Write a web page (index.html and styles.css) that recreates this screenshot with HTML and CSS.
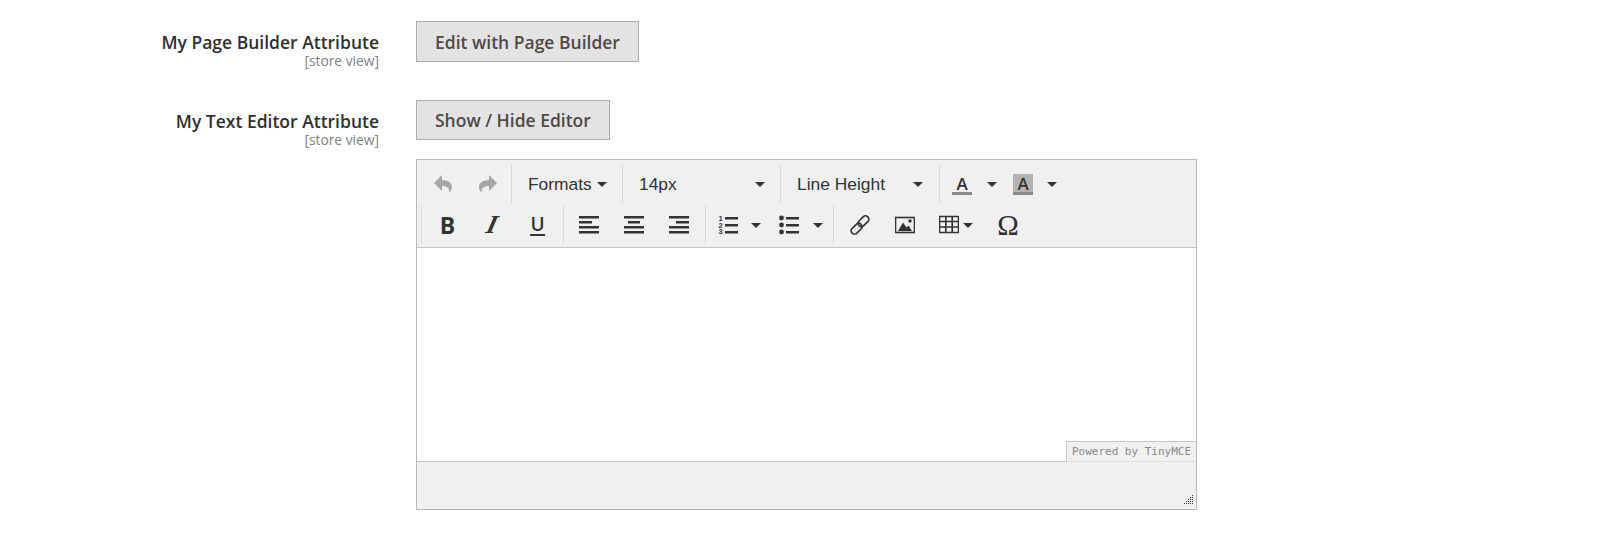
FILE: index.html
```html
<!DOCTYPE html>
<html lang="en">
<head>
    <meta charset="UTF-8">
    <title>Attributes</title>
    <link rel="stylesheet" href="styles.css">
</head>
<body>

<div class="form-row row-builder">
    <div class="field-label">
        <div class="label-name">My Page Builder Attribute</div>
        <div class="label-scope">[store view]</div>
    </div>
    <div class="field-control">
        <button class="action-btn btn-tall">Edit with Page Builder</button>
    </div>
</div>

<div class="form-row">
    <div class="field-label">
        <div class="label-name">My Text Editor Attribute</div>
        <div class="label-scope">[store view]</div>
    </div>
    <div class="field-control">
        <button class="action-btn">Show / Hide Editor</button>

        <div class="mce-panel">
            <div class="mce-toolbar">
                <div class="mce-row">
                    <div class="mce-group first">
                        <span class="mce-btn">
                            <svg class="ico" viewBox="0 0 20 20"><path class="muted" d="M1 9 L9 1 V6 C15 6 19 9 19 13 C19 15 18 17 16 19 C17 14 14 12 9 12 V17 Z"/></svg>
                        </span>
                        <span class="mce-btn">
                            <svg class="ico" viewBox="0 0 20 20"><path class="muted" d="M19 9 L11 1 V6 C5 6 1 9 1 13 C1 15 2 17 4 19 C3 14 6 12 11 12 V17 Z"/></svg>
                        </span>
                    </div>
                    <div class="mce-group">
                        <span class="mce-list w-formats">Formats<i class="caret"></i></span>
                    </div>
                    <div class="mce-group">
                        <span class="mce-list w-size">14px<i class="caret"></i></span>
                    </div>
                    <div class="mce-group">
                        <span class="mce-list w-line">Line Height<i class="caret"></i></span>
                    </div>
                    <div class="mce-group">
                        <span class="mce-split w-color">
                            <span class="color-a">A</span><i class="caret"></i>
                        </span>
                        <span class="mce-split w-back">
                            <span class="color-a back">A</span><i class="caret"></i>
                        </span>
                    </div>
                </div>

                <div class="mce-row">
                    <div class="mce-group">
                        <span class="mce-btn"><span class="glyph-b">B</span></span>
                        <span class="mce-btn"><span class="glyph-i">I</span></span>
                        <span class="mce-btn"><span class="glyph-u">U</span></span>
                    </div>
                    <div class="mce-group group-align">
                        <span class="mce-btn">
                            <svg class="ico" viewBox="0 0 20 20"><path d="M0 1h20v2.6H0zM0 6h13v2.6H0zM0 11h20v2.6H0zM0 16h20v2.6H0z"/></svg>
                        </span>
                        <span class="mce-btn">
                            <svg class="ico" viewBox="0 0 20 20"><path d="M0 1h20v2.6H0zM4 6h12v2.6H4zM0 11h20v2.6H0zM0 16h20v2.6H0z"/></svg>
                        </span>
                        <span class="mce-btn">
                            <svg class="ico" viewBox="0 0 20 20"><path d="M0 1h20v2.6H0zM7 6h13v2.6H7zM0 11h20v2.6H0zM0 16h20v2.6H0z"/></svg>
                        </span>
                    </div>
                    <div class="mce-group">
                        <span class="mce-split w-number">
                            <svg class="ico" viewBox="0 0 20 20">
                                <text class="tiny" x="0.5" y="6">1</text>
                                <text class="tiny" x="0.5" y="12.5">2</text>
                                <text class="tiny" x="0.5" y="19">3</text>
                                <path d="M7 2h13v2.4H7zM7 9h13v2.4H7zM7 16h13v2.4H7z"/>
                            </svg>
                            <i class="caret"></i>
                        </span>
                        <span class="mce-split w-bullet">
                            <svg class="ico" viewBox="0 0 20 20">
                                <circle cx="2.5" cy="3" r="2.4"/>
                                <circle cx="2.5" cy="10" r="2.4"/>
                                <circle cx="2.5" cy="17" r="2.4"/>
                                <path d="M7 2h13v2.4H7zM7 9h13v2.4H7zM7 16h13v2.4H7z"/>
                            </svg>
                            <i class="caret"></i>
                        </span>
                    </div>
                    <div class="mce-group">
                        <span class="mce-btn">
                            <svg class="ico" viewBox="0 0 20 20">
                                <g class="outline">
                                    <rect x="7.2" y="3" width="12.4" height="6.6" rx="3.3" transform="rotate(-45 13.4 6.3)"/>
                                    <rect x="0.4" y="10.4" width="12.4" height="6.6" rx="3.3" transform="rotate(-45 6.6 13.7)"/>
                                </g>
                            </svg>
                        </span>
                        <span class="mce-btn">
                            <svg class="ico" viewBox="0 0 20 20">
                                <rect class="outline" x="0.5" y="2.5" width="19" height="15"/>
                                <path d="M3 16 L8 7.5 L11.5 12.5 L13.5 10.5 L17 16 Z"/>
                                <circle cx="15" cy="6" r="1.7"/>
                            </svg>
                        </span>
                        <span class="mce-btn table-btn">
                            <svg class="ico" viewBox="0 0 20 20">
                                <path class="outline" d="M0.5 1.5h19v16H0.5zM0.5 6.5h19M0.5 12h19M6.8 1.5v16M13.2 1.5v16"/>
                            </svg>
                            <i class="caret"></i>
                        </span>
                        <span class="mce-btn omega-btn"><span class="glyph-o">Ω</span></span>
                    </div>
                </div>
            </div>

            <div class="mce-body">
                <span class="mce-brand">Powered by TinyMCE</span>
            </div>

            <div class="mce-status">
                <svg class="mce-resize" width="11" height="12" viewBox="0 0 11 12">
                    <defs>
                        <pattern id="grip-dots" width="2" height="2" patternUnits="userSpaceOnUse">
                            <rect width="1" height="1"/>
                        </pattern>
                    </defs>
                    <path d="M11 0V12H0Z" fill="url(#grip-dots)"/>
                </svg>
            </div>
        </div>
    </div>
</div>

</body>
</html>
```

FILE: styles.css
```css
body {
    margin: 0;
    padding-top: 21px;
    background-color: #ffffff;
    color: #303030;
    font-family: "Open Sans", sans-serif;
}

.form-row {
    display: grid;
    grid-template-columns: 379px 781px;
    column-gap: 37px;
}

.row-builder {
    margin-bottom: 32px;
}

.field-label {
    text-align: right;
    padding-top: 9px;
}

.label-name {
    font-size: 17.5px;
    font-weight: 590;
    line-height: 24px;
}

.label-scope {
    font-size: 13.8px;
    line-height: 15px;
    margin-top: -1px;
    color: #808080;
}

.action-btn {
    display: block;
    height: 40px;
    padding: 0 18px;
    background-color: #e3e3e3;
    border: 1px solid #adadad;
    border-radius: 0;
    color: #514943;
    font-family: "Open Sans", sans-serif;
    font-size: 17.5px;
    font-weight: 600;
}

.btn-tall {
    height: 41px;
}

/* editor */
.mce-panel {
    position: relative;
    margin-top: 19px;
    border: 1px solid #b9b9b9;
    background-color: #f0f0f0;
}

.mce-toolbar {
    padding: 5px 0 3px 4px;
    border-bottom: 1px solid #c5c5c5;
}

.mce-row {
    display: flex;
    height: 38px;
    margin-bottom: 3px;
}

.mce-row:last-child {
    margin-bottom: 0;
}

.mce-group {
    display: flex;
    padding: 0 3px;
    border-left: 1px solid #d9d9d9;
}

.mce-group.first {
    border-left: none;
    margin-left: -1px;
    padding: 0 1px 0 0;
}

.mce-group.group-align {
    padding: 0 4px 0 2px;
}

.mce-btn {
    display: flex;
    align-items: center;
    justify-content: center;
    width: 45px;
}

.mce-list {
    display: flex;
    align-items: center;
    justify-content: space-between;
    box-sizing: border-box;
    padding: 0 13px;
    font-family: "Liberation Sans", sans-serif;
    font-size: 17.4px;
    color: #333333;
}

.w-formats { width: 104px; padding-right: 12px; }
.w-size { width: 151px; padding-right: 12px; }
.w-line { width: 152px; }

.mce-split {
    display: flex;
    align-items: center;
}

.w-color { width: 60px; padding-left: 9px; }
.w-back { width: 57px; padding-left: 1px; }

.w-number { width: 52px; padding-left: 9px; }
.w-bullet { width: 51px; padding-left: 9px; }

.w-number .caret {
    margin-left: 13px;
}

.w-bullet .caret {
    margin-left: 14px;
}

.w-color .caret {
    margin-left: 15px;
}

.w-back .caret {
    margin-left: 14px;
}

.caret {
    display: inline-block;
    width: 0;
    height: 0;
    border-top: 5px solid #333333;
    border-left: 5px solid transparent;
    border-right: 5px solid transparent;
}

.ico {
    width: 20px;
    height: 20px;
    fill: #333333;
    flex: none;
}

.ico .muted {
    fill: #a6a6a6;
}

.ico .outline {
    fill: none;
    stroke: #333333;
    stroke-width: 1.6;
}

.ico .tiny {
    font-family: "Liberation Sans", sans-serif;
    font-size: 7.5px;
    font-weight: 700;
}

.glyph-b {
    font-family: "Open Sans", sans-serif;
    font-weight: 700;
    font-size: 23px;
    line-height: 1;
    color: #333333;
}

.glyph-i {
    display: inline-block;
    transform: skewX(-14deg);
    font-family: "Liberation Serif", serif;
    font-style: italic;
    font-weight: 700;
    font-size: 26px;
    line-height: 1;
    color: #333333;
}

.glyph-u {
    font-family: "Open Sans", sans-serif;
    font-weight: 600;
    font-size: 19px;
    line-height: 19px;
    color: #333333;
    border-bottom: 2px solid #333333;
}

.glyph-o {
    font-family: "Liberation Serif", serif;
    font-size: 29px;
    line-height: 1;
    color: #333333;
}

.color-a {
    display: block;
    width: 20px;
    height: 18px;
    border-bottom: 3px solid #888888;
    font-family: "Open Sans", sans-serif;
    font-weight: 600;
    font-size: 17px;
    line-height: 19px;
    text-align: center;
    color: #333333;
}

.color-a.back {
    background-color: #b3b3b3;
}

.table-btn {
    justify-content: flex-start;
    box-sizing: border-box;
    width: 58px;
    padding-left: 12px;
}

.table-btn .caret {
    margin-left: 4px;
}

.omega-btn {
    width: 46px;
}

.mce-body {
    position: relative;
    height: 213px;
    background-color: #ffffff;
    border-bottom: 1px solid #c5c5c5;
}

/* sits over the corner of the text area */
.mce-brand {
    position: absolute;
    right: 0;
    bottom: -1px;
    width: 129px;
    height: 19px;
    border-top: 1px solid #c5c5c5;
    border-left: 1px solid #c5c5c5;
    border-bottom: 1px solid #dddddd;
    background-color: #f0f0f0;
    font-family: "DejaVu Sans Mono", monospace;
    font-size: 11px;
    line-height: 19px;
    text-align: center;
    color: #888888;
}

.mce-status {
    position: relative;
    height: 47px;
}

.mce-resize {
    position: absolute;
    right: 3px;
    bottom: 4px;
    fill: #333333;
    shape-rendering: crispEdges;
}
```
